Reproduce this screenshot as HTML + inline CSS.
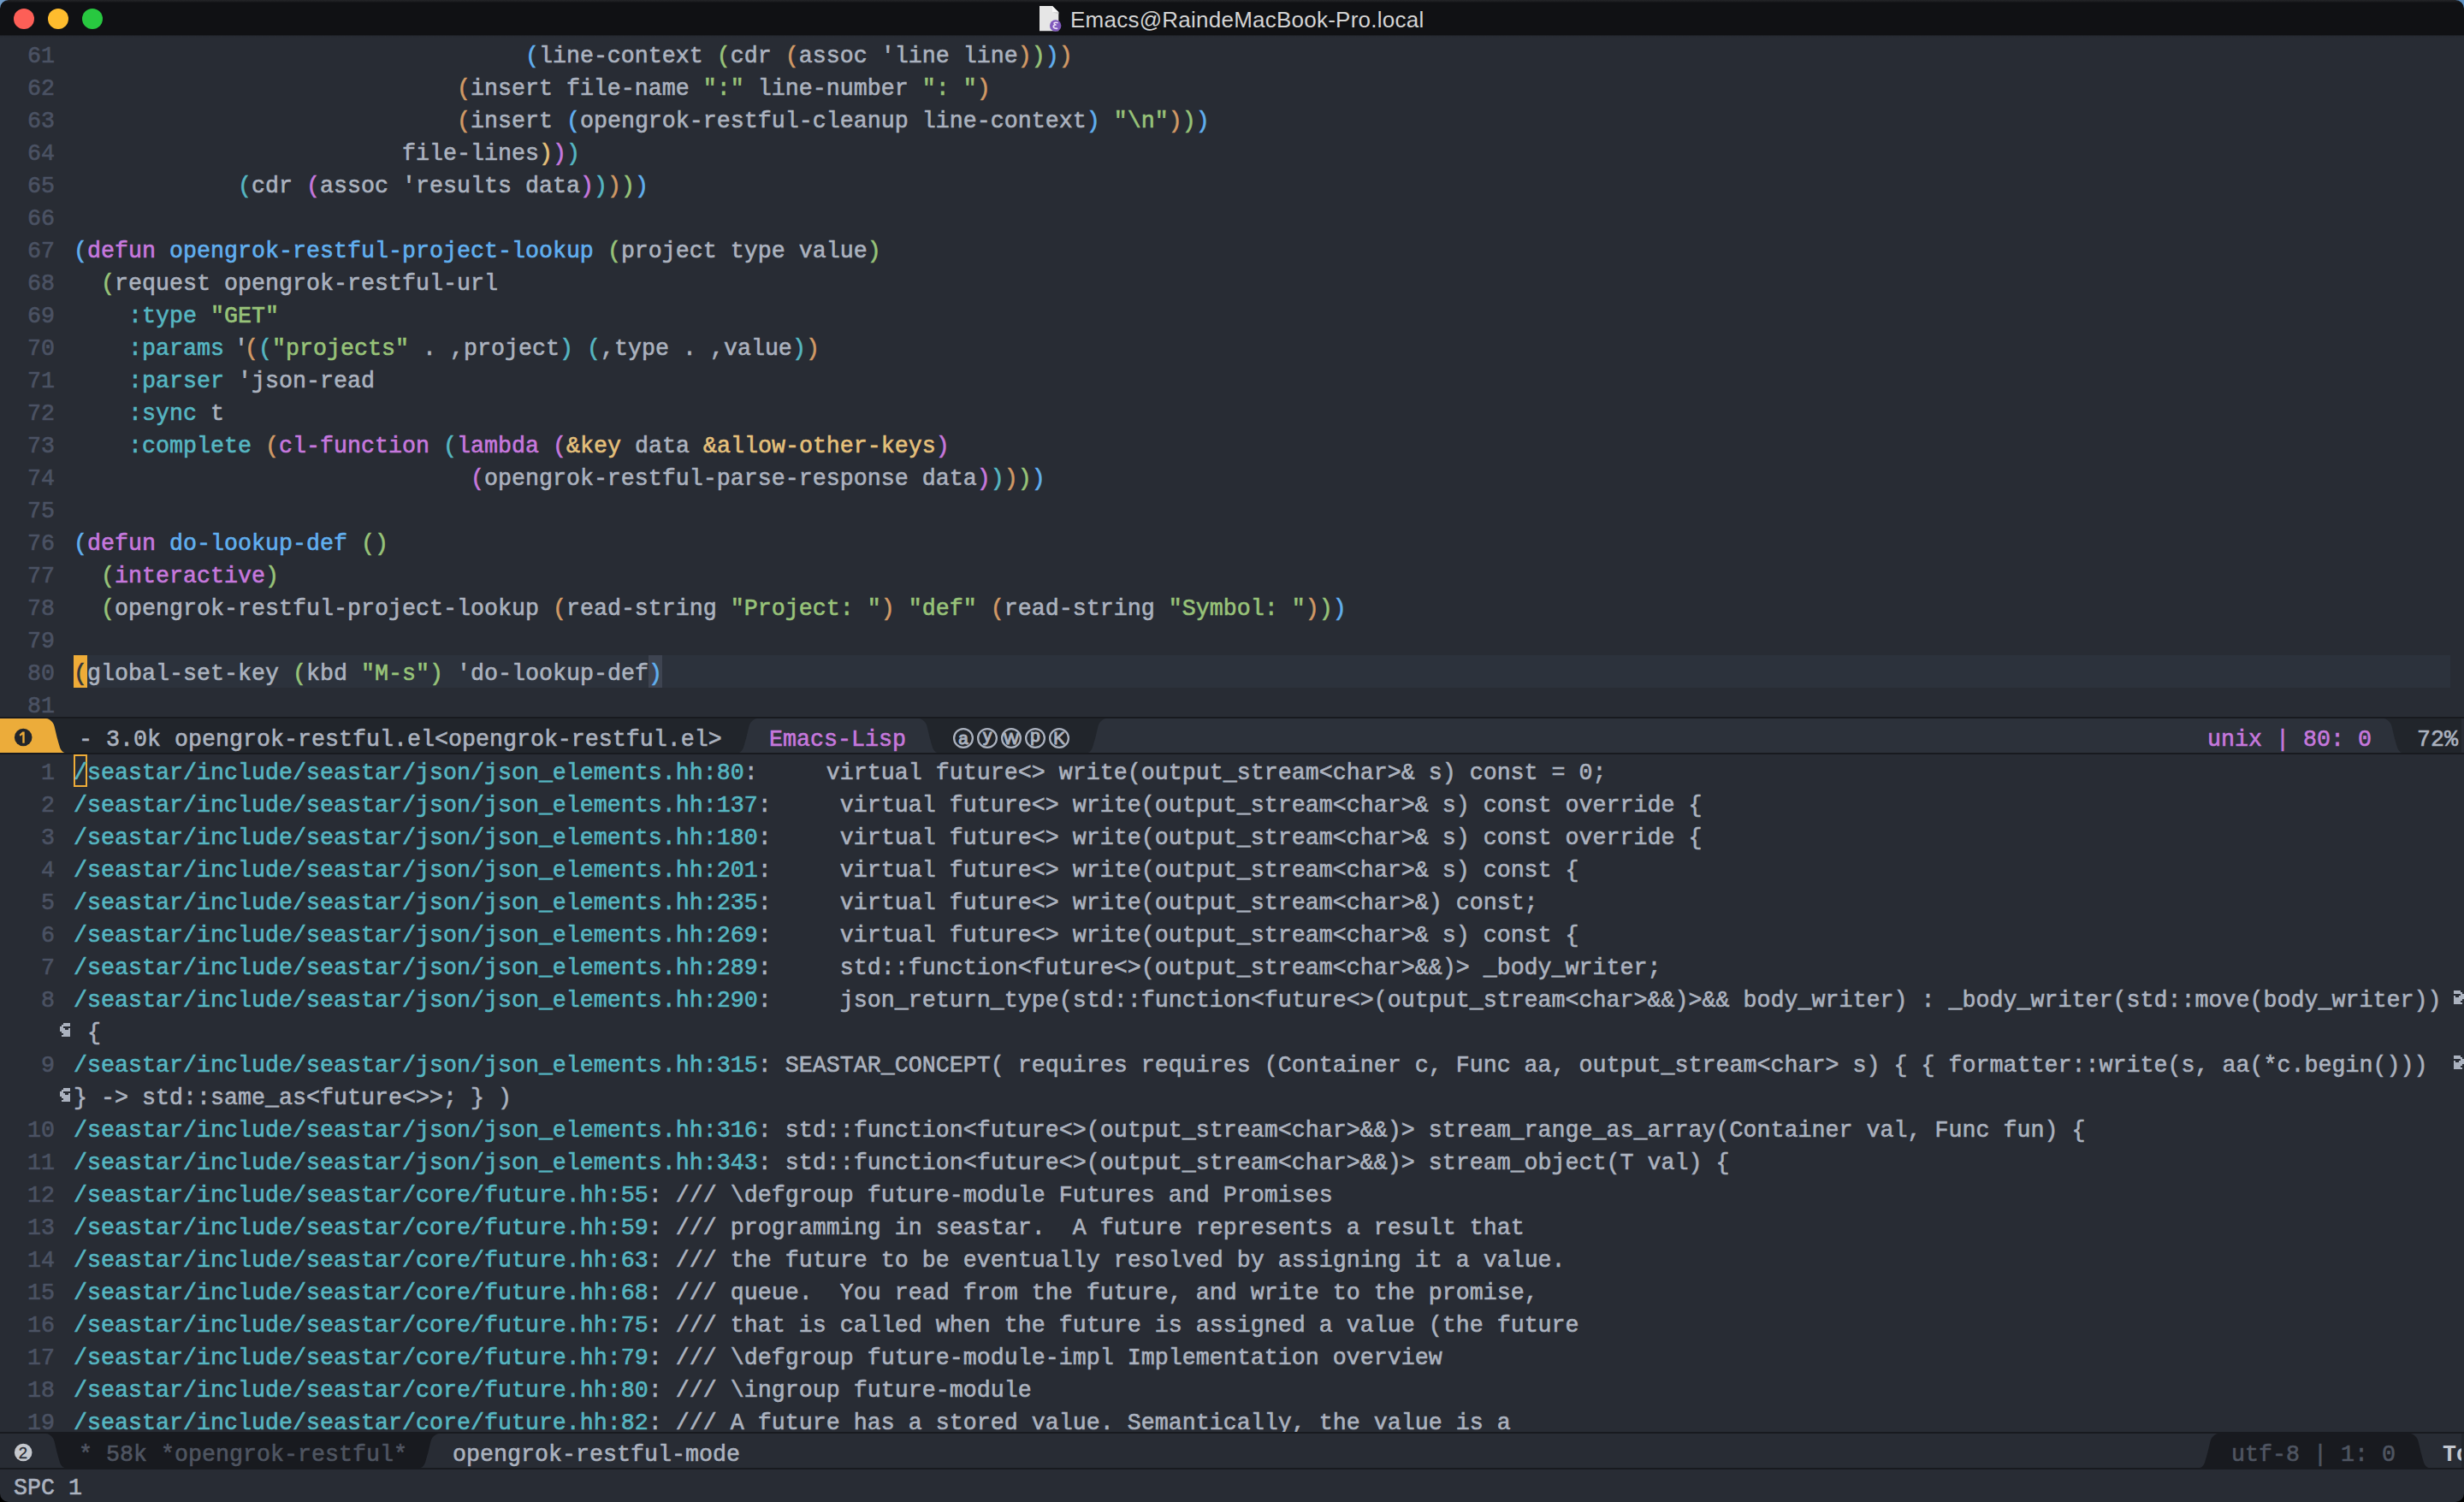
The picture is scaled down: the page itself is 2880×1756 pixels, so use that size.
<!DOCTYPE html>
<html><head><meta charset="utf-8"><title>Emacs</title>
<style>
html,body{margin:0;padding:0}
body{width:2880px;height:1756px;background:#282c34;overflow:hidden;position:relative;font-family:"Liberation Mono",monospace;font-size:26.6667px;color:#abb2bf;-webkit-font-smoothing:antialiased;-webkit-text-stroke:0.6px}
.b{color:#61afef}.p{color:#c678dd}.g{color:#98c379}.o{color:#d19a66}.c{color:#56b6c2}.y{color:#e5c07b}
#title{position:absolute;left:0;top:0;width:2880px;height:41px;background:#101114}
#title .hl{position:absolute;left:0;top:0;width:2880px;height:3px;background:linear-gradient(#242528,#1c1d20 60%,#101114)}
#title .sep{position:absolute;left:0;top:41px;width:2880px;height:3px;background:linear-gradient(#1a1c21,#262a31 50%,#282c34)}
.tl{position:absolute;top:10px;width:24px;height:24px;border-radius:50%}
#ttxt{position:absolute;left:1251px;top:0;height:42px;line-height:46px;font-family:"Liberation Sans",sans-serif;font-size:26px;color:#d4d4d4;white-space:pre;letter-spacing:0.24px;-webkit-text-stroke:0}
.win{position:absolute;left:0;width:2880px;overflow:hidden}
.row{position:absolute;left:0;width:2880px;height:38px;line-height:38px;white-space:pre}
.num{position:absolute;left:0;top:3px;width:64px;text-align:right;color:#4b5263}
.txt{position:absolute;left:86px;top:3px}
.txt,.num,.ml .t,#echo span{transform:scaleY(1.06);transform-origin:0 26.1px}
.hlrow{position:absolute;left:86px;width:2778px;height:38px;background:#2c323c}
.cur{color:#30343c}
.blk{position:absolute;width:16px;height:38px}
.pm{}
.hq{display:inline-block;width:8px;text-indent:-4px;overflow:visible}
.hollow{position:absolute;left:86px;top:0;width:16px;height:38px;box-sizing:border-box;border:2px solid #eeac38}
.fr{position:absolute}
.ml{position:absolute;left:0;width:2880px;height:44px;box-sizing:border-box;border-top:2px solid #181a1f;border-bottom:2px solid #181a1f;overflow:hidden}
.ml .t{position:absolute;top:5px;height:40px;line-height:40px;white-space:pre}
.ml svg{position:absolute;top:0}
.seg{position:absolute;top:0;height:40px}
svg text{-webkit-text-stroke:0}
.corner{position:absolute}
#echo{position:absolute;left:0;top:1718px;width:2880px;height:38px;line-height:38px;white-space:pre}
#echo span{position:absolute;left:16px;top:3px}
</style></head><body>
<div id="title"><div class="hl"></div><div class="tl" style="left:16px;background:#fd5f57"></div><div class="tl" style="left:56px;background:#febc2e"></div><div class="tl" style="left:96px;background:#28c840"></div><svg style="position:absolute;left:1213px;top:6px" width="30" height="32" viewBox="0 0 30 32"><path d="M2 1 H17 L24.3 8.2 V30.2 H2 Z" fill="#e6e6e6"/><path d="M17 1 L24.3 8.2 H17 Z" fill="#f8f8f8"/><path d="M17 8.2 H24.3 V10.5 Z" fill="#cfcfcf"/><circle cx="20.7" cy="24" r="6.7" fill="#8059bd"/><path d="M23 20.6 C19.2 19.6 17.8 21 20.6 23 C17.2 24 17.2 27 22.6 27.4" fill="none" stroke="#e8dcf5" stroke-width="1.6" stroke-linecap="round"/></svg><div id="ttxt">Emacs@RaindeMacBook-Pro.local</div><div class="sep"></div></div>
<div class="win" style="top:44px;height:794px">
<div class="row" style="top:0px"><span class="num">61</span><span class="txt">                                 <span class="b">(</span>line-context <span class="g">(</span>cdr <span class="o">(</span>assoc 'line line<span class="o">)</span><span class="g">)</span><span class="b">)</span><span class="o">)</span></span></div>
<div class="row" style="top:38px"><span class="num">62</span><span class="txt">                            <span class="o">(</span>insert file-name <span class="g">":"</span> line-number <span class="g">": "</span><span class="o">)</span></span></div>
<div class="row" style="top:76px"><span class="num">63</span><span class="txt">                            <span class="o">(</span>insert <span class="b">(</span>opengrok-restful-cleanup line-context<span class="b">)</span> <span class="g">"\n"</span><span class="o">)</span><span class="g">)</span><span class="b">)</span></span></div>
<div class="row" style="top:114px"><span class="num">64</span><span class="txt">                        file-lines<span class="y">)</span><span class="p">)</span><span class="c">)</span></span></div>
<div class="row" style="top:152px"><span class="num">65</span><span class="txt">            <span class="c">(</span>cdr <span class="p">(</span>assoc 'results data<span class="p">)</span><span class="c">)</span><span class="o">)</span><span class="g">)</span><span class="b">)</span></span></div>
<div class="row" style="top:190px"><span class="num">66</span><span class="txt"></span></div>
<div class="row" style="top:228px"><span class="num">67</span><span class="txt"><span class="b">(</span><span class="p">defun</span> <span class="b">opengrok-restful-project-lookup</span> <span class="g">(</span>project type value<span class="g">)</span></span></div>
<div class="row" style="top:266px"><span class="num">68</span><span class="txt">  <span class="g">(</span>request opengrok-restful-url</span></div>
<div class="row" style="top:304px"><span class="num">69</span><span class="txt">    <span class="c">:type</span> <span class="g">"GET"</span></span></div>
<div class="row" style="top:342px"><span class="num">70</span><span class="txt">    <span class="c">:params</span> <span class="hq">'</span><span class="o">(</span><span class="c">(</span><span class="g">"projects"</span> . ,project<span class="c">)</span> <span class="c">(</span>,type . ,value<span class="c">)</span><span class="o">)</span></span></div>
<div class="row" style="top:380px"><span class="num">71</span><span class="txt">    <span class="c">:parser</span> 'json-read</span></div>
<div class="row" style="top:418px"><span class="num">72</span><span class="txt">    <span class="c">:sync</span> t</span></div>
<div class="row" style="top:456px"><span class="num">73</span><span class="txt">    <span class="c">:complete</span> <span class="o">(</span><span class="p">cl-function</span> <span class="c">(</span><span class="p">lambda</span> <span class="p">(</span><span class="y">&amp;key</span> data <span class="y">&amp;allow-other-keys</span><span class="p">)</span></span></div>
<div class="row" style="top:494px"><span class="num">74</span><span class="txt">                             <span class="p">(</span>opengrok-restful-parse-response data<span class="p">)</span><span class="c">)</span><span class="o">)</span><span class="g">)</span><span class="b">)</span></span></div>
<div class="row" style="top:532px"><span class="num">75</span><span class="txt"></span></div>
<div class="row" style="top:570px"><span class="num">76</span><span class="txt"><span class="b">(</span><span class="p">defun</span> <span class="b">do-lookup-def</span> <span class="g">(</span><span class="g">)</span></span></div>
<div class="row" style="top:608px"><span class="num">77</span><span class="txt">  <span class="g">(</span><span class="p">interactive</span><span class="g">)</span></span></div>
<div class="row" style="top:646px"><span class="num">78</span><span class="txt">  <span class="g">(</span>opengrok-restful-project-lookup <span class="o">(</span>read-string <span class="g">"Project: "</span><span class="o">)</span> <span class="g">"def"</span> <span class="o">(</span>read-string <span class="g">"Symbol: "</span><span class="o">)</span><span class="g">)</span><span class="b">)</span></span></div>
<div class="row" style="top:684px"><span class="num">79</span><span class="txt"></span></div>
<div class="hlrow" style="top:722px"></div><div class="blk" style="left:86px;top:722px;background:#eeac38"></div><div class="blk" style="left:758px;top:722px;background:#3e4451"></div><div class="row" style="top:722px"><span class="num">80</span><span class="txt"><span class="cur">(</span>global-set-key <span class="g">(</span>kbd <span class="g">"M-s"</span><span class="g">)</span> 'do-lookup-def<span class="b pm">)</span></span></div>
<div class="row" style="top:760px"><span class="num">81</span><span class="txt"></span></div>
</div>
<div class="win" style="top:882px;height:792px">
<div class="hollow" style="top:0px"></div><div class="row" style="top:0px"><span class="num">1</span><span class="txt"><span class="c">/seastar/include/seastar/json/json_elements.hh:80</span>:     virtual future&lt;&gt; write(output_stream&lt;char&gt;&amp; s) const = 0;</span></div>
<div class="row" style="top:38px"><span class="num">2</span><span class="txt"><span class="c">/seastar/include/seastar/json/json_elements.hh:137</span>:     virtual future&lt;&gt; write(output_stream&lt;char&gt;&amp; s) const override {</span></div>
<div class="row" style="top:76px"><span class="num">3</span><span class="txt"><span class="c">/seastar/include/seastar/json/json_elements.hh:180</span>:     virtual future&lt;&gt; write(output_stream&lt;char&gt;&amp; s) const override {</span></div>
<div class="row" style="top:114px"><span class="num">4</span><span class="txt"><span class="c">/seastar/include/seastar/json/json_elements.hh:201</span>:     virtual future&lt;&gt; write(output_stream&lt;char&gt;&amp; s) const {</span></div>
<div class="row" style="top:152px"><span class="num">5</span><span class="txt"><span class="c">/seastar/include/seastar/json/json_elements.hh:235</span>:     virtual future&lt;&gt; write(output_stream&lt;char&gt;&amp;) const;</span></div>
<div class="row" style="top:190px"><span class="num">6</span><span class="txt"><span class="c">/seastar/include/seastar/json/json_elements.hh:269</span>:     virtual future&lt;&gt; write(output_stream&lt;char&gt;&amp; s) const {</span></div>
<div class="row" style="top:228px"><span class="num">7</span><span class="txt"><span class="c">/seastar/include/seastar/json/json_elements.hh:289</span>:     std::function&lt;future&lt;&gt;(output_stream&lt;char&gt;&amp;&amp;)&gt; _body_writer;</span></div>
<svg class="fr" style="left:2864px;top:276px" width="16" height="16" viewBox="0 0 16 16" fill="#abb2bf" shape-rendering="crispEdges"><rect x="4" y="0" width="8" height="2"/><rect x="4" y="2" width="10" height="2"/><rect x="12" y="4" width="4" height="2"/><rect x="4" y="6" width="2" height="2"/><rect x="10" y="6" width="6" height="2"/><rect x="4" y="8" width="12" height="2"/><rect x="4" y="10" width="10" height="2"/><rect x="4" y="12" width="8" height="2"/><rect x="4" y="14" width="10" height="2"/></svg><div class="row" style="top:266px"><span class="num">8</span><span class="txt"><span class="c">/seastar/include/seastar/json/json_elements.hh:290</span>:     json_return_type(std::function&lt;future&lt;&gt;(output_stream&lt;char&gt;&amp;&amp;)&gt;&amp;&amp; body_writer) : _body_writer(std::move(body_writer))</span></div>
<svg class="fr" style="left:70px;top:314px" width="16" height="16" viewBox="0 0 16 16" fill="#abb2bf" shape-rendering="crispEdges"><rect x="4" y="0" width="8" height="2"/><rect x="2" y="2" width="10" height="2"/><rect x="0" y="4" width="4" height="2"/><rect x="0" y="6" width="6" height="2"/><rect x="10" y="6" width="2" height="2"/><rect x="0" y="8" width="12" height="2"/><rect x="2" y="10" width="10" height="2"/><rect x="4" y="12" width="8" height="2"/><rect x="2" y="14" width="10" height="2"/></svg><div class="row" style="top:304px"><span class="txt"> {</span></div>
<svg class="fr" style="left:2864px;top:352px" width="16" height="16" viewBox="0 0 16 16" fill="#abb2bf" shape-rendering="crispEdges"><rect x="4" y="0" width="8" height="2"/><rect x="4" y="2" width="10" height="2"/><rect x="12" y="4" width="4" height="2"/><rect x="4" y="6" width="2" height="2"/><rect x="10" y="6" width="6" height="2"/><rect x="4" y="8" width="12" height="2"/><rect x="4" y="10" width="10" height="2"/><rect x="4" y="12" width="8" height="2"/><rect x="4" y="14" width="10" height="2"/></svg><div class="row" style="top:342px"><span class="num">9</span><span class="txt"><span class="c">/seastar/include/seastar/json/json_elements.hh:315</span>: SEASTAR_CONCEPT( requires requires (Container c, Func aa, output_stream&lt;char&gt; s) { { formatter::write(s, aa(*c.begin())) </span></div>
<svg class="fr" style="left:70px;top:390px" width="16" height="16" viewBox="0 0 16 16" fill="#abb2bf" shape-rendering="crispEdges"><rect x="4" y="0" width="8" height="2"/><rect x="2" y="2" width="10" height="2"/><rect x="0" y="4" width="4" height="2"/><rect x="0" y="6" width="6" height="2"/><rect x="10" y="6" width="2" height="2"/><rect x="0" y="8" width="12" height="2"/><rect x="2" y="10" width="10" height="2"/><rect x="4" y="12" width="8" height="2"/><rect x="2" y="14" width="10" height="2"/></svg><div class="row" style="top:380px"><span class="txt">} -&gt; std::same_as&lt;future&lt;&gt;&gt;; } )</span></div>
<div class="row" style="top:418px"><span class="num">10</span><span class="txt"><span class="c">/seastar/include/seastar/json/json_elements.hh:316</span>: std::function&lt;future&lt;&gt;(output_stream&lt;char&gt;&amp;&amp;)&gt; stream_range_as_array(Container val, Func fun) {</span></div>
<div class="row" style="top:456px"><span class="num">11</span><span class="txt"><span class="c">/seastar/include/seastar/json/json_elements.hh:343</span>: std::function&lt;future&lt;&gt;(output_stream&lt;char&gt;&amp;&amp;)&gt; stream_object(T val) {</span></div>
<div class="row" style="top:494px"><span class="num">12</span><span class="txt"><span class="c">/seastar/include/seastar/core/future.hh:55</span>: /// \defgroup future-module Futures and Promises</span></div>
<div class="row" style="top:532px"><span class="num">13</span><span class="txt"><span class="c">/seastar/include/seastar/core/future.hh:59</span>: /// programming in seastar.  A future represents a result that</span></div>
<div class="row" style="top:570px"><span class="num">14</span><span class="txt"><span class="c">/seastar/include/seastar/core/future.hh:63</span>: /// the future to be eventually resolved by assigning it a value.</span></div>
<div class="row" style="top:608px"><span class="num">15</span><span class="txt"><span class="c">/seastar/include/seastar/core/future.hh:68</span>: /// queue.  You read from the future, and write to the promise,</span></div>
<div class="row" style="top:646px"><span class="num">16</span><span class="txt"><span class="c">/seastar/include/seastar/core/future.hh:75</span>: /// that is called when the future is assigned a value (the future</span></div>
<div class="row" style="top:684px"><span class="num">17</span><span class="txt"><span class="c">/seastar/include/seastar/core/future.hh:79</span>: /// \defgroup future-module-impl Implementation overview</span></div>
<div class="row" style="top:722px"><span class="num">18</span><span class="txt"><span class="c">/seastar/include/seastar/core/future.hh:80</span>: /// \ingroup future-module</span></div>
<div class="row" style="top:760px"><span class="num">19</span><span class="txt"><span class="c">/seastar/include/seastar/core/future.hh:82</span>: /// A future has a stored value. Semantically, the value is a</span></div>
</div>
<div class="ml" style="top:838px;background:#21252b"><div class="seg" style="left:0;width:54px;background:#ecac3a"></div><svg style="left:54px" width="23" height="40" viewBox="0 0 23 40"><rect width="23" height="40" fill="#ecac3a"/><g transform="translate(23,0) scale(-1,1)"><path d="M0 40 C2 40 3.6 39.4 5 37.5 C6.3 35.8 7 34 7.4 32.5 C8.6 28 9.6 25 10.4 22 C11.5 17.5 12.5 13 13.5 9 C14.3 6 15.5 4.4 16.8 3.3 C18.6 1.7 20.6 0 23 0 L0 0 Z" fill="#21252b"/></g></svg><svg style="left:13px" width="28" height="40" viewBox="0 0 28 40"><circle cx="14.2" cy="22" r="10.3" fill="#21252b"/><path d="M13.3 15.6 H15.7 V28.7 H13.3 V18.7 L10.7 20.8 L9.6 19.1 Z" fill="#ecac3a"/></svg><span class="t" style="left:92px">- 3.0k opengrok-restful.el&lt;opengrok-restful.el&gt;</span><svg style="left:862px" width="23" height="40" viewBox="0 0 23 40"><rect width="23" height="40" fill="#2c313a"/><path d="M0 40 C2 40 3.6 39.4 5 37.5 C6.3 35.8 7 34 7.4 32.5 C8.6 28 9.6 25 10.4 22 C11.5 17.5 12.5 13 13.5 9 C14.3 6 15.5 4.4 16.8 3.3 C18.6 1.7 20.6 0 23 0 L0 0 Z" fill="#21252b"/></svg><div class="seg" style="left:885px;width:189px;background:#2c313a"></div><svg style="left:1074px" width="23" height="40" viewBox="0 0 23 40"><rect width="23" height="40" fill="#2c313a"/><g transform="translate(23,0) scale(-1,1)"><path d="M0 40 C2 40 3.6 39.4 5 37.5 C6.3 35.8 7 34 7.4 32.5 C8.6 28 9.6 25 10.4 22 C11.5 17.5 12.5 13 13.5 9 C14.3 6 15.5 4.4 16.8 3.3 C18.6 1.7 20.6 0 23 0 L0 0 Z" fill="#21252b"/></g></svg><span class="t p" style="left:899px">Emacs-Lisp</span><svg style="left:1112px" width="28" height="40" viewBox="0 0 28 40"><circle cx="14" cy="23" r="10.9" fill="none" stroke="#abb2bf" stroke-width="2.3"/><text x="14" y="29.6" text-anchor="middle" font-family="Liberation Sans, sans-serif" font-size="20.5" fill="#abb2bf" stroke="#abb2bf" stroke-width="1.1">a</text></svg><svg style="left:1140px" width="28" height="40" viewBox="0 0 28 40"><circle cx="14" cy="23" r="10.9" fill="none" stroke="#abb2bf" stroke-width="2.3"/><text x="14" y="27.4" text-anchor="middle" font-family="Liberation Sans, sans-serif" font-size="20.5" fill="#abb2bf" stroke="#abb2bf" stroke-width="1.1">y</text></svg><svg style="left:1168px" width="28" height="40" viewBox="0 0 28 40"><circle cx="14" cy="23" r="10.9" fill="none" stroke="#abb2bf" stroke-width="2.3"/><text x="14" y="29.6" text-anchor="middle" font-family="Liberation Sans, sans-serif" font-size="19" fill="#abb2bf" stroke="#abb2bf" stroke-width="1.1">W</text></svg><svg style="left:1196px" width="28" height="40" viewBox="0 0 28 40"><circle cx="14" cy="23" r="10.9" fill="none" stroke="#abb2bf" stroke-width="2.3"/><text x="14" y="27.4" text-anchor="middle" font-family="Liberation Sans, sans-serif" font-size="20.5" fill="#abb2bf" stroke="#abb2bf" stroke-width="1.1">p</text></svg><svg style="left:1224px" width="28" height="40" viewBox="0 0 28 40"><circle cx="14" cy="23" r="10.9" fill="none" stroke="#abb2bf" stroke-width="2.3"/><text x="14" y="29.6" text-anchor="middle" font-family="Liberation Sans, sans-serif" font-size="20.5" fill="#abb2bf" stroke="#abb2bf" stroke-width="1.1">K</text></svg><svg style="left:1270px" width="23" height="40" viewBox="0 0 23 40"><rect width="23" height="40" fill="#2c313a"/><path d="M0 40 C2 40 3.6 39.4 5 37.5 C6.3 35.8 7 34 7.4 32.5 C8.6 28 9.6 25 10.4 22 C11.5 17.5 12.5 13 13.5 9 C14.3 6 15.5 4.4 16.8 3.3 C18.6 1.7 20.6 0 23 0 L0 0 Z" fill="#21252b"/></svg><div class="seg" style="left:1293px;width:1493px;background:#2c313a"></div><svg style="left:2786px" width="23" height="40" viewBox="0 0 23 40"><rect width="23" height="40" fill="#2c313a"/><g transform="translate(23,0) scale(-1,1)"><path d="M0 40 C2 40 3.6 39.4 5 37.5 C6.3 35.8 7 34 7.4 32.5 C8.6 28 9.6 25 10.4 22 C11.5 17.5 12.5 13 13.5 9 C14.3 6 15.5 4.4 16.8 3.3 C18.6 1.7 20.6 0 23 0 L0 0 Z" fill="#21252b"/></g></svg><span class="t p" style="left:2580px">unix | 80: 0</span><span class="t" style="left:2825px">72%</span><div class="seg" style="left:2877px;width:3px;background:#282c34"></div></div>
<div class="ml" style="top:1674px;background:#282c34"><svg style="left:13px" width="28" height="40" viewBox="0 0 28 40"><circle cx="14.2" cy="22" r="10.3" fill="#c5c8ce"/><text x="14" y="28.6" text-anchor="middle" font-family="Liberation Sans, sans-serif" font-size="18.5" fill="#282c34" stroke="#282c34" stroke-width="0.3">2</text></svg><svg style="left:54px" width="23" height="40" viewBox="0 0 23 40"><rect width="23" height="40" fill="#282c34"/><g transform="translate(23,0) scale(-1,1)"><path d="M0 40 C2 40 3.6 39.4 5 37.5 C6.3 35.8 7 34 7.4 32.5 C8.6 28 9.6 25 10.4 22 C11.5 17.5 12.5 13 13.5 9 C14.3 6 15.5 4.4 16.8 3.3 C18.6 1.7 20.6 0 23 0 L0 0 Z" fill="#181a1f"/></g></svg><div class="seg" style="left:77px;width:413px;background:#181a1f"></div><svg style="left:490px" width="23" height="40" viewBox="0 0 23 40"><rect width="23" height="40" fill="#282c34"/><path d="M0 40 C2 40 3.6 39.4 5 37.5 C6.3 35.8 7 34 7.4 32.5 C8.6 28 9.6 25 10.4 22 C11.5 17.5 12.5 13 13.5 9 C14.3 6 15.5 4.4 16.8 3.3 C18.6 1.7 20.6 0 23 0 L0 0 Z" fill="#181a1f"/></svg><span class="t" style="left:92px;color:#4f5561">* 58k *opengrok-restful*</span><span class="t" style="left:529px">opengrok-restful-mode</span><svg style="left:2570px" width="23" height="40" viewBox="0 0 23 40"><rect width="23" height="40" fill="#181a1f"/><path d="M0 40 C2 40 3.6 39.4 5 37.5 C6.3 35.8 7 34 7.4 32.5 C8.6 28 9.6 25 10.4 22 C11.5 17.5 12.5 13 13.5 9 C14.3 6 15.5 4.4 16.8 3.3 C18.6 1.7 20.6 0 23 0 L0 0 Z" fill="#282c34"/></svg><div class="seg" style="left:2593px;width:224px;background:#181a1f"></div><svg style="left:2817px" width="23" height="40" viewBox="0 0 23 40"><rect width="23" height="40" fill="#181a1f"/><g transform="translate(23,0) scale(-1,1)"><path d="M0 40 C2 40 3.6 39.4 5 37.5 C6.3 35.8 7 34 7.4 32.5 C8.6 28 9.6 25 10.4 22 C11.5 17.5 12.5 13 13.5 9 C14.3 6 15.5 4.4 16.8 3.3 C18.6 1.7 20.6 0 23 0 L0 0 Z" fill="#282c34"/></g></svg><span class="t" style="left:2608px;color:#4f5561">utf-8 | 1: 0</span><span class="t" style="left:2855px;color:#c2c7d0;font-weight:bold;-webkit-text-stroke:0">Top</span><div class="seg" style="left:2877px;width:3px;background:#21252b"></div><span></span></div>
<div id="echo"><span>SPC 1</span></div>
<svg class="corner" style="left:0;top:0" width="10" height="10" viewBox="0 0 10 10"><path d="M0 0 H10 A10 10 0 0 0 0 10 Z" fill="#6f9bc8"/></svg><svg class="corner" style="left:2870px;top:0" width="10" height="10" viewBox="0 0 10 10"><path d="M10 0 H0 A10 10 0 0 1 10 10 Z" fill="#5b8fc0"/></svg><svg class="corner" style="left:0;top:1746px" width="10" height="10" viewBox="0 0 10 10"><path d="M0 10 H10 A10 10 0 0 1 0 0 Z" fill="#000"/></svg><svg class="corner" style="left:2870px;top:1746px" width="10" height="10" viewBox="0 0 10 10"><path d="M10 10 H0 A10 10 0 0 0 10 0 Z" fill="#000"/></svg></body></html>
